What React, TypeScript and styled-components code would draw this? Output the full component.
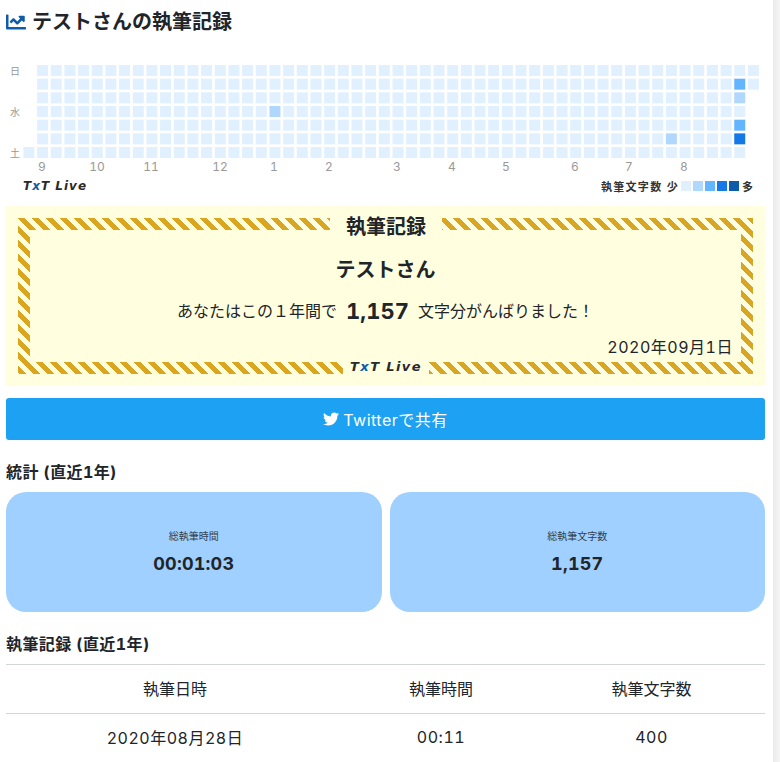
import React from "react";
import styled, { createGlobalStyle } from "styled-components";
import { FaChartLine, FaTwitter } from "react-icons/fa";

const FONT = `Inter, "Noto Sans CJK JP", "Noto Sans", sans-serif`;

const Global = createGlobalStyle`
  html, body { margin: 0; padding: 0; background: #fff; overflow: hidden; }
  body { font-family: ${FONT}; color: #212529; font-variant-numeric: tabular-nums; }
  #root { height: 762px; }
`;

const Shell = styled.div`
  display: flex;
  width: 780px;
  height: 762px;
  overflow: hidden;
`;
const Page = styled.main`
  width: 773px;
  flex: none;
  box-sizing: border-box;
  padding: 0 8px 0 6px;
`;
const Scrollbar = styled.div`
  flex: 1;
  background: linear-gradient(90deg, #ebebeb, #f5f5f5);
`;
const PageTitle = styled.h1`
  display: flex;
  align-items: center;
  gap: 6px;
  margin: 0;
  height: 44px;
  font-size: 20px;
  font-weight: 700;
  line-height: 44px;
  & svg { color: #0d5cab; flex: none; }
`;
const Chart = styled.svg`
  display: block;
  width: 759px;
  height: 116px;
  margin-top: 16px;
`;
const ChartFoot = styled.div`
  display: flex;
  align-items: center;
  justify-content: space-between;
  height: 19px;
  padding: 0 12px 0 17px;
`;
const Brand = styled.span`
  font-family: "DejaVu Sans", sans-serif;
  font-style: italic;
  font-weight: 700;
  font-size: 12px;
  letter-spacing: 1px;
  color: #2a2a2a;
  white-space: nowrap;
  & b { color: #0d5cab; font-weight: 700; }
`;
const Legend = styled.div`
  display: flex;
  align-items: center;
  gap: 2px;
  font-size: 11px;
  font-weight: 700;
  color: #333;
`;
const LegendLabel = styled.span`
  letter-spacing: 1.3px;
`;
const LegendEnd = styled.span`
  margin-left: 1px;
`;
const Swatch = styled.i<{ $c: string }>`
  display: block;
  width: 10px;
  height: 10px;
  background: ${(p) => p.$c};
`;
const Certificate = styled.section`
  box-sizing: border-box;
  margin-top: 11px;
  height: 180px;
  padding: 12px;
  background: #ffffe0;
`;
const Frame = styled.div`
  position: relative;
  box-sizing: border-box;
  height: 156px;
  padding: 12px;
  background: repeating-linear-gradient(45deg, #daa520 1.4px 6.35px, #ffffe0 6.35px 11.3px);
`;
const FrameInner = styled.div`
  box-sizing: border-box;
  height: 132px;
  background: #ffffe0;
  display: flex;
  flex-direction: column;
  align-items: center;
  padding: 25px 8px 0;
`;
const FrameTitle = styled.h2`
  position: absolute;
  top: -6px;
  left: 312px;
  width: 112px;
  height: 31px;
  margin: 0;
  background: #ffffe0;
  text-align: center;
  font-size: 20px;
  font-weight: 700;
  line-height: 31px;
`;
const FrameBrand = styled.div`
  position: absolute;
  bottom: -1px;
  left: 325px;
  width: 86px;
  height: 15px;
  background: #ffffe0;
  text-align: center;
  line-height: 11px;
  & > span { font-size: 13px; letter-spacing: 1.4px; }
`;
const Name = styled.div`
  font-size: 20px;
  font-weight: 700;
  line-height: 30px;
`;
const Message = styled.p`
  display: flex;
  align-items: center;
  gap: 9px;
  margin: 11px 0 0;
  font-size: 16px;
  line-height: 30px;
`;
const Count = styled.strong`
  font-size: 22px;
  font-weight: 700;
`;
const CertDate = styled.div`
  align-self: flex-end;
  margin-top: 9px;
  font-size: 16px;
  line-height: 24px;
  letter-spacing: 0.5px;
`;
const ShareButton = styled.button`
  display: flex;
  align-items: center;
  justify-content: center;
  gap: 4px;
  width: 100%;
  height: 42px;
  margin-top: 12px;
  border: 0;
  border-radius: 3px;
  background: #1da1f2;
  color: #fff;
  font: 400 16px ${FONT};
  letter-spacing: 0.5px;
`;
const SectionTitle = styled.h3`
  margin: 20px 0 8px;
  font-size: 16px;
  font-weight: 700;
  line-height: 24px;
  letter-spacing: 0.4px;
`;
const Stats = styled.div`
  display: grid;
  grid-template-columns: 1fr 1fr;
  gap: 8px;
`;
const StatCard = styled.div`
  box-sizing: border-box;
  height: 120px;
  padding-top: 3px;
  border-radius: 20px;
  background: #a0d0ff;
  display: flex;
  flex-direction: column;
  align-items: center;
  justify-content: center;
`;
const StatLabel = styled.div`
  font-size: 10px;
  line-height: 15px;
  color: #33404d;
`;
const StatValue = styled.div`
  margin-top: 5px;
  font-size: 18px;
  font-weight: 700;
  line-height: 30px;
  letter-spacing: 0.2px;
`;
const Table = styled.table`
  width: 100%;
  border-collapse: collapse;
  table-layout: fixed;
  font-size: 16px;
  & th, & td {
    height: 45px;
    padding: 0 0 3px;
    border-top: 1px solid #d3d6d9;
    text-align: center;
    font-weight: 400;
  }
  & td { letter-spacing: 0.5px; }
  & th:nth-child(1) { width: 338px; }
  & th:nth-child(2) { width: 194px; }
`;

const COLORS = ["#e0f0ff", "#b0d8ff", "#64b5ff", "#1479e6", "#0d5cab"];
const hot: Record<string, number> = {
  "18-3": 1,
  "47-5": 1,
  "52-1": 2,
  "52-2": 1,
  "52-4": 2,
  "52-5": 3,
};
const cells: { w: number; d: number; l: number }[] = [];
for (let w = 0; w < 54; w++) {
  for (let d = 0; d < 7; d++) {
    if (w === 0 && d !== 6) continue;
    if (w === 53 && d > 1) continue;
    cells.push({ w, d, l: hot[`${w}-${d}`] ?? 0 });
  }
}
const months: [string, number][] = [
  ["9", 36], ["10", 91], ["11", 145], ["12", 214], ["1", 268], ["2", 323],
  ["3", 391], ["4", 446], ["5", 500], ["6", 569], ["7", 623], ["8", 678],
];
const days: [string, number][] = [["日", 0], ["水", 3], ["土", 6]];

const BrandText = () => (
  <Brand>T<b>x</b>T Live</Brand>
);

export default function App() {
  return (
    <Shell>
      <Global />
      <Page>
        <PageTitle>
          <FaChartLine size={20} />
          テストさんの執筆記録
        </PageTitle>
        <Chart viewBox="0 0 759 116">
          {cells.map((c) => (
            <rect
              key={`${c.w}-${c.d}`}
              x={17.4 + c.w * 13.67}
              y={5 + c.d * 13.67}
              width={11}
              height={11}
              fill={COLORS[c.l]}
            />
          ))}
          {days.map(([t, d]) => (
            <text key={t} x={9} y={14.5 + d * 13.67} fontSize={10} fill="#999" textAnchor="middle">
              {t}
            </text>
          ))}
          {months.map(([t, x]) => (
            <text key={t} x={x} y={111} fontSize={12} fill="#999" textAnchor="middle">
              {t}
            </text>
          ))}
        </Chart>
        <ChartFoot>
          <BrandText />
          <Legend>
            <LegendLabel>執筆文字数 少</LegendLabel>
            {COLORS.map((c) => (
              <Swatch key={c} $c={c} />
            ))}
            <LegendEnd>多</LegendEnd>
          </Legend>
        </ChartFoot>
        <Certificate>
          <Frame>
            <FrameTitle>執筆記録</FrameTitle>
            <FrameInner>
              <Name>テストさん</Name>
              <Message>
                あなたはこの１年間で<Count>1,157</Count>文字分がんばりました！
              </Message>
              <CertDate>2020年09月1日</CertDate>
            </FrameInner>
            <FrameBrand>
              <BrandText />
            </FrameBrand>
          </Frame>
        </Certificate>
        <ShareButton>
          <FaTwitter size={16} />
          Twitterで共有
        </ShareButton>
        <SectionTitle>統計 (直近1年)</SectionTitle>
        <Stats>
          <StatCard>
            <StatLabel>総執筆時間</StatLabel>
            <StatValue>00:01:03</StatValue>
          </StatCard>
          <StatCard>
            <StatLabel>総執筆文字数</StatLabel>
            <StatValue>1,157</StatValue>
          </StatCard>
        </Stats>
        <SectionTitle>執筆記録 (直近1年)</SectionTitle>
        <Table>
          <thead>
            <tr>
              <th>執筆日時</th>
              <th>執筆時間</th>
              <th>執筆文字数</th>
            </tr>
          </thead>
          <tbody>
            <tr>
              <td>2020年08月28日</td>
              <td>00:11</td>
              <td>400</td>
            </tr>
          </tbody>
        </Table>
      </Page>
      <Scrollbar />
    </Shell>
  );
}
